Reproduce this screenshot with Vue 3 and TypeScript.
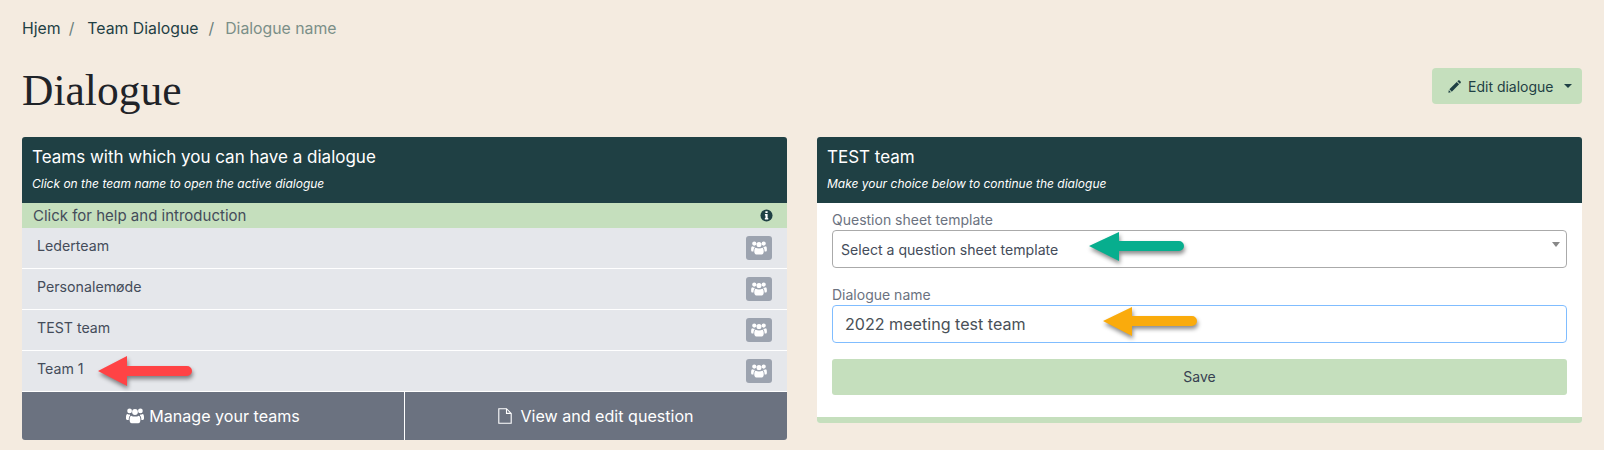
<script setup lang="ts">
const teams: string[] = ['Lederteam', 'Personalemøde', 'TEST team', 'Team 1']
const usersPath = 'M3.600 5.300a2.400 2.400 0 1 1 0-4.800 2.400 2.400 0 0 1 0 4.800zM14.400 5.300a2.400 2.400 0 1 1 0-4.800 2.400 2.400 0 0 1 0 4.800zM9 6.900a2.900 2.900 0 1 1 0-5.800 2.900 2.900 0 0 1 0 5.800zM5.200 7.700c1 .6 2.300.9 3.800.9s2.800-.3 3.800-.9c1.100.2 1.600 1.800 1.600 4.300 0 2-.9 3.300-2.200 3.300H5.800c-1.300 0-2.200-1.300-2.200-3.300 0-2.500.5-4.100 1.600-4.300zM0 9.300c0-2 .5-3.300 1.400-3.300.7.400 1.400.6 2.400.6.100.3.200.6.400.8-1.100.7-1.400 2.400-1.500 4.600H1.200C.5 12 0 11.300 0 10.300zM18 9.300v1c0 1-.5 1.700-1.200 1.700h-1.400c-.1-2.200-.4-3.900-1.500-4.600.2-.2.300-.5.400-.8 1 0 1.700-.2 2.400-.6.900 0 1.300 1.300 1.300 3.300z'
</script>

<template>
  <div class="page">
    <nav class="crumbs">
      <span class="crumb">Hjem</span>
      <span class="sep first">/</span>
      <span class="crumb">Team Dialogue</span>
      <span class="sep">/</span>
      <span class="crumb current">Dialogue name</span>
    </nav>

    <div class="title-row">
      <h1>Dialogue</h1>
      <button class="edit-btn" type="button">
        <svg class="pencil" viewBox="0 0 14 14" width="13" height="13" aria-hidden="true">
          <path fill="currentColor" d="M3.100 13.200.4 13.700l.5-2.800zM1.500 10l7.900-7.900 2.600 2.600-7.900 7.900zM10.100 1.400l.9-.9c.4-.4 1-.4 1.400 0l1.200 1.200c.4.400.4 1 0 1.400l-.9.900z" />
        </svg>
        <span>Edit dialogue</span>
        <i class="caret"></i>
      </button>
    </div>

    <div class="columns">
      <section class="card left">
        <header class="card-head">
          <h2>Teams with which you can have a dialogue</h2>
          <em>Click on the team name to open the active dialogue</em>
        </header>
        <div class="help">
          <span>Click for help and introduction</span>
          <svg viewBox="0 0 14 14" width="13" height="13" aria-hidden="true">
            <circle cx="7" cy="7" r="6.500" fill="#1f4044" />
            <path fill="#fff" d="M5.800 2.500h2.400v1.800H5.800zM5.300 5.500h2.900v4.200h.700v1.500H5.200V9.700h.7V7H5.300z" />
          </svg>
        </div>
        <ul class="teams">
          <li v-for="team in teams" :key="team">
            <span class="team-name">{{ team }}</span>
            <span class="team-btn">
              <svg viewBox="0 0 18 16" width="16" height="14" aria-hidden="true">
                <path fill="#fff" :d="usersPath" />
              </svg>
            </span>
          </li>
        </ul>
        <div class="actions">
          <button type="button">
            <svg viewBox="0 0 18 16" width="18" height="16" aria-hidden="true">
              <path fill="#fff" :d="usersPath" />
            </svg>
            Manage your teams
          </button>
          <button class="question" type="button">
            <svg viewBox="0 0 14 16" width="14" height="16" aria-hidden="true">
              <path fill="none" stroke="#fff" stroke-width="1.100" d="M.8.700h7.700l4.700 4.700v9.900H.8zM8.500.700v4.700h4.700" />
            </svg>
            View and edit question
          </button>
        </div>
      </section>

      <section class="card right">
        <header class="card-head">
          <h2>TEST team</h2>
          <em>Make your choice below to continue the dialogue</em>
        </header>
        <form class="form" @submit.prevent>
          <label class="label">Question sheet template</label>
          <div class="select">
            <span>Select a question sheet template</span>
            <i class="select-caret"></i>
          </div>
          <label class="label second">Dialogue name</label>
          <div class="input">2022 meeting test team</div>
          <button class="save" type="button">Save</button>
        </form>
        <div class="foot"></div>
      </section>
    </div>

    <svg class="arrow a-red" viewBox="0 0 110 44" width="110" height="44" aria-hidden="true">
      <path fill="#ff4345" d="M1 16 30 1v10h60a5 5 0 0 1 0 10H30v10z" />
    </svg>
    <svg class="arrow a-green" viewBox="0 0 110 44" width="110" height="44" aria-hidden="true">
      <path fill="#07ae8e" d="M1 15 31 1v9h60a5 5 0 0 1 0 10H31v10z" />
    </svg>
    <svg class="arrow a-orange" viewBox="0 0 110 44" width="110" height="44" aria-hidden="true">
      <path fill="#faab0c" d="M1 15 30 1v9h60a5 5 0 0 1 0 10H30v10z" />
    </svg>
  </div>
</template>

<style>
html, body {
  margin: 0;
  background: #f4ebe0;
}
</style>

<style scoped>
* {
  box-sizing: border-box;
}
.page {
  position: relative;
  width: 1604px;
  height: 450px;
  overflow: hidden;
  padding: 19px 22px 0;
  background: #f4ebe0;
  color: #444c5a;
  font-family: Inter, "Liberation Sans", sans-serif;
  font-size: 14px;
}
.crumbs {
  display: flex;
  align-items: center;
  height: 20px;
  font-size: 15.800px;
  line-height: 20px;
  color: #1f4044;
}
.sep {
  margin: 0 11px 0 10px;
  color: #6b7f7c;
}
.sep.first {
  margin: 0 13px 0 8px;
}
.current {
  color: #7b8f88;
}
.title-row {
  display: flex;
  align-items: center;
  justify-content: space-between;
  margin-top: 29px;
  height: 36px;
}
h1 {
  margin: 8px 0 0;
  font-family: "Liberation Serif", serif;
  font-size: 43.500px;
  font-weight: 400;
  color: #1f2328;
  line-height: 36px;
}
.edit-btn {
  display: flex;
  align-items: center;
  gap: 7px;
  width: 150px;
  height: 36px;
  padding: 0 0 0 16px;
  border: 0;
  border-radius: 4px;
  background: #c5dfbd;
  color: #1f4044;
  font: inherit;
}
.caret {
  margin-left: 3px;
  width: 0;
  height: 0;
  border-left: 4.500px solid transparent;
  border-right: 4.500px solid transparent;
  border-top: 4.500px solid #1f4044;
}
.columns {
  display: grid;
  grid-template-columns: 765px 765px;
  gap: 30px;
  margin-top: 33px;
}
.card {
  overflow: hidden;
  border-radius: 3px;
}
.card-head {
  height: 66px;
  padding: 10px 10px 0;
  background: #1f4044;
  color: #fff;
}
.card-head h2 {
  margin: 0;
  font-size: 17px;
  font-weight: 400;
  line-height: 20px;
}
.card-head em {
  display: block;
  margin-top: 9px;
  font-size: 12px;
  line-height: 16px;
}
.help {
  display: flex;
  align-items: center;
  justify-content: space-between;
  height: 25px;
  padding: 0 14px 0 11px;
  background: #c5dfbd;
  font-size: 15px;
}
.teams {
  margin: 0;
  padding: 0;
  list-style: none;
}
.teams li {
  display: flex;
  align-items: center;
  justify-content: space-between;
  height: 41px;
  padding: 0 15px;
  background: #e5e7eb;
  border-bottom: 1px solid #fff;
  font-size: 14.200px;
}
.team-name {
  margin-bottom: 5px;
}
.team-btn {
  display: flex;
  align-items: center;
  justify-content: center;
  width: 26px;
  height: 24px;
  border-radius: 3px;
  background: #9ca3af;
}
.actions {
  display: grid;
  grid-template-columns: 382px 383px;
  height: 48px;
}
.actions button {
  display: flex;
  align-items: center;
  justify-content: center;
  gap: 5px;
  border: 0;
  background: #6b7280;
  color: #fff;
  font: inherit;
  font-size: 16.100px;
}
.actions button.question {
  gap: 8px;
  border-left: 1px solid #fff;
}
.right {
  background: #fff;
  align-self: start;
}
.form {
  display: flex;
  flex-direction: column;
  height: 214px;
  padding: 8px 15px 0;
}
.label {
  height: 19px;
  font-size: 14px;
  line-height: 17px;
  color: #6b7280;
}
.label.second {
  margin-top: 18px;
}
.select,
.input {
  display: flex;
  align-items: center;
  height: 38px;
  border-radius: 4px;
  background: #fff;
}
.select {
  position: relative;
  justify-content: space-between;
  padding: 0 8px;
  border: 1px solid #aaa;
  font-size: 14.100px;
}
.select-caret {
  position: absolute;
  top: 11px;
  right: 6px;
  width: 0;
  height: 0;
  border-left: 4px solid transparent;
  border-right: 4px solid transparent;
  border-top: 5px solid #888;
}
.input {
  padding: 0 12px;
  border: 1px solid #80bdff;
  font-size: 16.100px;
  color: #495057;
}
.save {
  height: 36px;
  margin-top: 16px;
  padding: 0 0 2px;
  border: 0;
  border-radius: 3px;
  background: #c5dfbd;
  color: #374151;
  font: inherit;
}
.foot {
  height: 6px;
  background: #c5dfbd;
}
.arrow {
  position: absolute;
  overflow: visible;
  filter: drop-shadow(1px 3px 2px rgba(0, 0, 0, 0.45));
}
.a-red {
  left: 97px;
  top: 355px;
}
.a-green {
  left: 1088px;
  top: 231px;
}
.a-orange {
  left: 1102px;
  top: 306px;
}
</style>
